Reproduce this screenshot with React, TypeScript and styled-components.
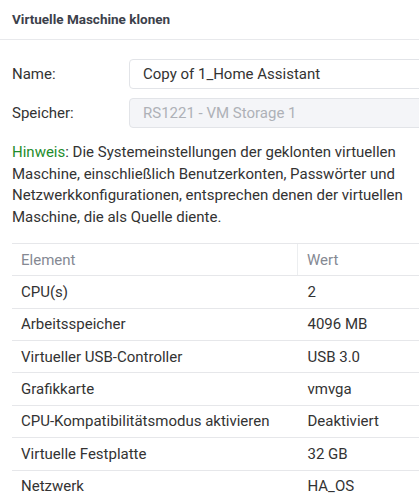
import { FC } from 'react'
import styled, { createGlobalStyle } from 'styled-components'

const GlobalStyle = createGlobalStyle`
  html, body {
    margin: 0;
    padding: 0;
    background: #fff;
  }
  body {
    font-family: Roboto, 'Liberation Sans', sans-serif;
    color: #333;
    overflow: hidden;
  }
`

const rows: [string, string][] = [
  ['CPU(s)', '2'],
  ['Arbeitsspeicher', '4096 MB'],
  ['Virtueller USB-Controller', 'USB 3.0'],
  ['Grafikkarte', 'vmvga'],
  ['CPU-Kompatibilitätsmodus aktivieren', 'Deaktiviert'],
  ['Virtuelle Festplatte', '32 GB'],
  ['Netzwerk', 'HA_OS'],
]

const App: FC = () => (
  <>
    <GlobalStyle />
    <StyleDivPage>
      <StyleDivHeader>{'Virtuelle Maschine klonen'}</StyleDivHeader>
      <StyleDivBody>
        <StyleDivForm>
          <StyleLabel>{'Name:'}</StyleLabel>
          <StyleInput defaultValue={'Copy of 1_Home Assistant'} />
          <StyleLabel>{'Speicher:'}</StyleLabel>
          <StyleInput disabled defaultValue={'RS1221 - VM Storage 1'} />
        </StyleDivForm>
        <StylePNote>
          <StyleSpanHint>{'Hinweis'}</StyleSpanHint>
          {
            ': Die Systemeinstellungen der geklonten virtuellen Maschine, einschließlich Benutzerkonten, Passwörter und Netzwerkkonfigurationen, entsprechen denen der virtuellen Maschine, die als Quelle diente.'
          }
        </StylePNote>
        <StyleTable>
          <thead>
            <tr>
              <StyleTh>{'Element'}</StyleTh>
              <StyleTh $divider>{'Wert'}</StyleTh>
            </tr>
          </thead>
          <tbody>
            {rows.map(([name, value]) => (
              <tr key={name}>
                <StyleTd>{name}</StyleTd>
                <StyleTd $value>{value}</StyleTd>
              </tr>
            ))}
          </tbody>
        </StyleTable>
      </StyleDivBody>
    </StyleDivPage>
  </>
)

export default App

const StyleDivPage = styled.div`
  width: 419px;
  height: 500px;
  overflow: hidden;
`

const StyleDivHeader = styled.div`
  height: 40px;
  box-sizing: border-box;
  padding: 11px 12px 0;
  font-size: 13.5px;
  font-weight: 700;
  color: #3c414b;
  border-bottom: 1px solid #e8e9ec;
`

const StyleDivBody = styled.div`
  padding: 19px 0 0 12px;
`

const StyleDivForm = styled.div`
  display: grid;
  grid-template-columns: 117px 300px;
  row-gap: 9px;
  align-items: center;
`

const StyleLabel = styled.label`
  font-size: 15px;
  color: #333;
`

const StyleInput = styled.input`
  box-sizing: border-box;
  height: 30px;
  width: 300px;
  padding: 0 13px;
  border: 1px solid #e2e4e8;
  border-radius: 4px;
  font-family: Roboto, 'Liberation Sans', sans-serif;
  font-size: 15px;
  color: #333;
  background: #fff;
  outline: none;

  &:disabled {
    background: #f4f5f8;
    color: #aeb1b7;
  }
`

const StylePNote = styled.p`
  margin: 14px 0 0;
  padding-right: 14px;
  font-size: 15px;
  line-height: 21.7px;
  color: #333;
`

const StyleSpanHint = styled.span`
  color: #1e8c2c;
`

const StyleTable = styled.table`
  margin-top: 14px;
  width: 420px;
  border-collapse: collapse;
  font-size: 15px;
`

const StyleTh = styled.th<{ $divider?: boolean }>`
  height: 31.4px;
  padding: 0 0 0 9px;
  text-align: left;
  font-weight: 400;
  color: #858993;
  border-top: 1px solid #e6e7ea;
  border-bottom: 1px solid #e6e7ea;
  border-left: ${p => (p.$divider ? '1px solid #eceef0' : 'none')};
  width: ${p => (p.$divider ? 'auto' : '276px')};
`

const StyleTd = styled.td<{ $value?: boolean }>`
  height: 31.4px;
  padding: 0 0 0 ${p => (p.$value ? '10px' : '9px')};
  color: #333;
  border-bottom: 1px solid #e6e7ea;
`
